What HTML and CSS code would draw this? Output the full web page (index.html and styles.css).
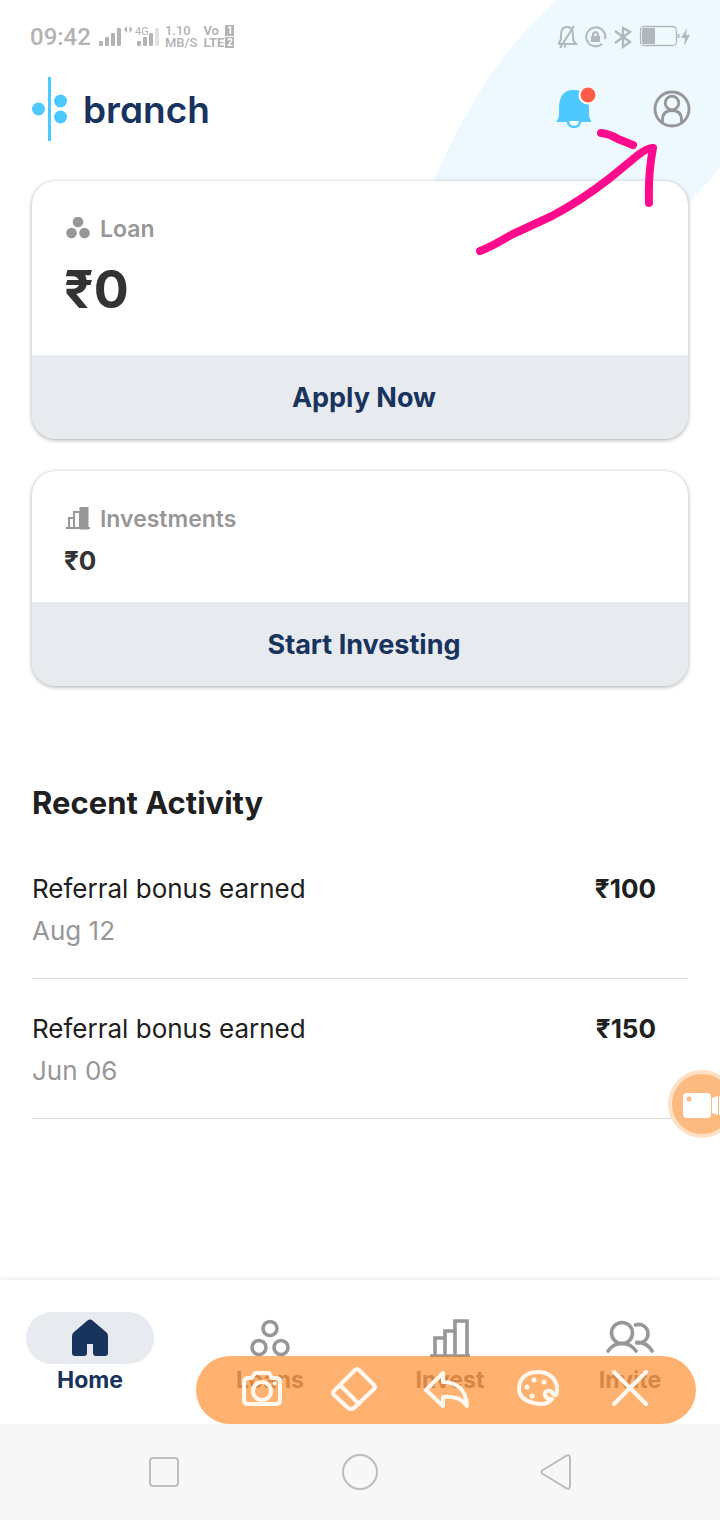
FILE: index.html
```html
<!DOCTYPE html>
<html lang="en">
<head>
  <meta charset="UTF-8">
  <meta name="viewport" content="width=device-width,initial-scale=1">
  <title>Branch</title>
  <link rel="stylesheet" href="styles.css">
</head>
<body>
  <svg class="backdrop" width="290" height="210" viewBox="430 0 290 210" aria-hidden="true">
    <path d="M557 0C500 50 460 117 432 185V210H680C696 196 709 182 720 167V0Z" fill="#eef9ff"/>
  </svg>

  <!-- status bar -->
  <div class="status">
    <div class="status-left">
      <span class="clock">09:42</span>
      <svg width="62" height="26" viewBox="98 24 62 26" fill="#b3b3b3">
        <rect x="100" y="41" width="4" height="5" rx="1"/><rect x="106" y="37" width="4" height="9" rx="1"/>
        <rect x="112" y="33" width="4" height="13" rx="1"/><rect x="118" y="28" width="4" height="18" rx="1"/>
        <path d="M128 26v7l-3-3.500zM130.500 26v7l3-3.500z"/>
        <text x="136" y="35" class="net">4G</text>
        <rect x="138" y="41" width="4" height="5" rx="1"/><rect x="144" y="37" width="4" height="9" rx="1"/>
        <rect x="150" y="33" width="4" height="13" rx="1"/><rect x="156" y="28" width="4" height="18" rx="1" fill="#e2e2e2"/>
      </svg>
      <div class="stack"><span>1.10</span><span>MB/S</span></div>
      <div class="stack lte"><span>Vo <i>1</i></span><span>LTE<i>2</i></span></div>
    </div>
    <svg width="136" height="26" viewBox="556 24 136 26" fill="none" stroke="#b1b8bd" stroke-width="2">
      <path d="M559 44h17c-3-3-3-5-3-9 0-5-2-8-6-8s-6 3-6 8c0 4 0 6-3 9M560 48l14-22M564 46l2 1"/>
      <path d="M602 44a9.500 9.500 0 1 1 3-5M598 46h-5"/>
      <rect x="591" y="36" width="9" height="6" fill="#b1b8bd" stroke="none"/><path d="M593 37v-3q2.500-4 5 0v3"/>
      <path d="M615 31l15 11-7 5V28l7 4-15 11" stroke-width="2.400"/>
      <rect x="640.500" y="26.500" width="36" height="19" rx="4" stroke-width="1.300"/>
      <path d="M644 28h11v16h-11q-2 0-2-2V30q0-2 2-2zM677.500 34h2v4h-2z" fill="#b1b8bd" stroke="none"/>
      <path d="M687 28l-6 10h4l-1 8 6-11h-4z" fill="#b1b8bd" stroke="none"/>
    </svg>
  </div>

  <header class="header">
    <a class="logo" href="#" aria-label="branch">
      <svg width="36" height="64" viewBox="0 0 36 64" fill="#4dc9ff">
        <path d="M16 0h3v64h-3z"/>
        <circle cx="6.500" cy="32" r="6.500"/><circle cx="28.500" cy="24" r="6.500"/><circle cx="28.500" cy="40" r="6.500"/>
      </svg>
      <span>branch</span>
    </a>
    <div class="header-actions">
      <button class="icon-btn" aria-label="Notifications">
        <svg width="42" height="44" viewBox="556 87 42 44">
          <path d="M558 122c-2 0-1-2 0-3 1-2 1-5 1-10 0-12 4-19 15-19s15 7 15 19c0 5 0 8 1 10 1 1 2 3 0 3z" fill="#4dc9ff"/>
          <path d="M568 121c0 8 12 8 12 0" fill="#fff" stroke="#4dc9ff" stroke-width="2.500"/>
          <circle cx="588" cy="95" r="8.500" fill="#ff5a4a" stroke="#fff" stroke-width="2"/>
        </svg>
      </button>
      <button class="icon-btn" aria-label="Profile">
        <svg width="38" height="38" viewBox="0 0 38 38" fill="none" stroke="#979797" stroke-width="2.800">
          <circle cx="19" cy="19" r="17"/><circle cx="19" cy="13" r="6.800"/>
          <path d="M9.500 33v-3c0-6 3-9.500 9.500-9.500s9.500 3.500 9.500 9.500v3"/>
        </svg>
      </button>
    </div>
  </header>

  <main>
    <section class="card">
      <div class="card-body loan">
        <h2>
          <svg width="24" height="24" viewBox="0 0 24 24" fill="#979797"><circle cx="12" cy="5" r="5.300"/><circle cx="5.500" cy="16" r="5.300"/><circle cx="18.500" cy="16" r="5.300"/></svg>
          Loan
        </h2>
        <p>₹0</p>
      </div>
      <button class="card-action">Apply Now</button>
    </section>

    <section class="card">
      <div class="card-body">
        <h2>
          <svg width="24" height="24" viewBox="0 0 24 24" fill="none" stroke="#979797" stroke-width="2"><path d="M0 21h24"/><path d="M3 21V11h5v10M8 11V5h6v15"/><path d="M14.500 0.500h7v21h-7z" fill="#979797"/></svg>
          Investments
        </h2>
        <p>₹0</p>
      </div>
      <button class="card-action">Start Investing</button>
    </section>

    <section class="activity">
      <h1>Recent Activity</h1>
      <ul>
        <li>
          <div>Referral bonus earned<time>Aug 12</time></div>
          <b>₹100</b>
        </li>
        <li>
          <div>Referral bonus earned<time>Jun 06</time></div>
          <b>₹150</b>
        </li>
      </ul>
    </section>
  </main>

  <footer class="bottom">
    <nav class="tabs">
      <a class="active" href="#">
        <span class="pill"><svg width="36" height="38" viewBox="0 0 36 38" fill="#18335d"><path d="M15.500 1.500q2.500-2 5 0L34 13q2 1.500 2 4v17q0 3-3 3h-9q-3 0-3-3v-9h-6v9q0 3-3 3H3q-3 0-3-3V17q0-2.500 2-4z"/></svg></span>
        Home
      </a>
      <a href="#">
        <span class="pill"><svg width="40" height="38" viewBox="0 0 40 38" fill="none" stroke="#979797" stroke-width="3.600"><circle cx="20" cy="9.500" r="7"/><circle cx="9" cy="28.500" r="7"/><circle cx="31" cy="28.500" r="7"/></svg></span>
        Loans
      </a>
      <a href="#">
        <span class="pill"><svg width="42" height="38" viewBox="0 0 42 38" fill="none" stroke="#979797" stroke-width="3.600"><path d="M1 37h40M6 36V19h9M16 36V12h9M26 37V2h12v35"/></svg></span>
        Invest
      </a>
      <a href="#">
        <span class="pill"><svg width="48" height="38" viewBox="0 0 48 38" fill="none" stroke="#979797" stroke-width="3.600" stroke-linecap="round"><circle cx="16" cy="14" r="10.500"/><path d="M2 32q5-7.500 14-7.500t14 7.500M29.500 6a9.300 9.300 0 1 1 0 17.500q11-1 16.500 8.500"/></svg></span>
        Invite
      </a>
    </nav>

    <!-- recorder tools -->
    <div class="tools">
      <button aria-label="Camera"><svg width="44" height="44" viewBox="0 0 44 44"><path d="M8 12h4l3-5h14l3 5h4q4 0 4 4v18q0 4-4 4H8q-4 0-4-4V16q0-4 4-4z"/><circle cx="22" cy="25" r="9"/><circle cx="34.500" cy="17.500" r="2" class="dot"/></svg></button>
      <button aria-label="Eraser"><svg width="48" height="48" viewBox="0 0 48 48"><path d="M4 27L25 6q2-2 4 0l15 15q2 2 0 4L25 43q-4 4-8 0L4 31q-2-2 0-4zM11 22l18 18"/></svg></button>
      <button aria-label="Undo"><svg width="48" height="44" viewBox="0 0 48 44"><path d="M4 24L21 7v9c14 0 23 8 24 24-5-8-13-10-24-9v9z"/></svg></button>
      <button aria-label="Colors"><svg width="44" height="44" viewBox="0 0 44 44"><path d="M36 33C32 38 25 39 18 37 8 35 2 29 3 21 4 11 12 6 22 6c11 0 19 7 19 17q0 9-4 5c-2-5-9-4-8 1 1 3 3 5 7 4z"/><circle cx="18" cy="14" r="2.500" class="dot"/><circle cx="28" cy="16" r="2.500" class="dot"/><circle cx="11" cy="21" r="2.500" class="dot"/><circle cx="16" cy="30" r="2.500" class="dot"/></svg></button>
      <button aria-label="Close"><svg width="44" height="44" viewBox="0 0 44 44"><path d="M6 6l32 32M38 6L6 38"/></svg></button>
    </div>

    <div class="system-nav">
      <button aria-label="Recent apps"><svg width="36" height="36" viewBox="0 0 36 36"><rect x="4" y="4" width="28" height="28" rx="3"/></svg></button>
      <button aria-label="Home screen"><svg width="36" height="36" viewBox="0 0 36 36"><circle cx="18" cy="18" r="17"/></svg></button>
      <button aria-label="Back"><svg width="36" height="36" viewBox="0 0 36 36"><path d="M5 16L28 2q4-2 4 2v28q0 4-4 2L5 20q-3-2 0-4z"/></svg></button>
    </div>
  </footer>

  <button class="record" aria-label="Record">
    <svg width="60" height="60" viewBox="0 0 60 60" fill="#fff"><rect x="11" y="19" width="28" height="25" rx="4"/><path d="M40 24l6-2v19l-6-2zM47 22h10v19H47z"/><circle cx="17" cy="25" r="2.500" fill="#fdba80"/></svg>
  </button>

  <!-- hand-drawn arrow pointing at the profile icon -->
  <svg class="arrow" width="190" height="136" viewBox="470 124 190 136" aria-hidden="true">
    <path d="M601 133q9 1 17 6l15 6M480 251C493 246 500 241 513 234L552 216Q582 200 610 178L638 155Q649 147 653 148Q648 174 649 203"/>
  </svg>
</body>
</html>
```
FILE: styles.css
```css
* { box-sizing: border-box; }
body { position: relative; display: flex; flex-direction: column; min-height: 100vh; margin: 0; overflow-x: hidden; background: #fff; color: #202020; font-family: Inter, "Liberation Sans", sans-serif; }
button { padding: 0; border: none; background: none; font-family: inherit; cursor: pointer; }
a { color: inherit; text-decoration: none; }
svg { display: block; flex: none; }
h1, h2, p, ul { margin: 0; padding: 0; }

.backdrop { position: absolute; top: 0; right: 0; z-index: -1; }

.status { display: flex; justify-content: space-between; align-items: center; height: 74px; padding: 0 28px 0 30px; color: #b3b3b3; font-family: Roboto, sans-serif; }
.status-left { display: flex; align-items: center; gap: 6px; }
.clock { font-size: 24px; font-weight: 500; }
.net { font-size: 11px; }
.stack { display: flex; flex-direction: column; font-size: 13px; line-height: 12px; font-weight: 500; }
.lte { font-weight: 700; }
.lte span { display: flex; justify-content: space-between; gap: 1px; }
.lte i { flex: none; width: 9px; height: 11px; background: #b3b3b3; color: #fff; font-size: 10px; line-height: 11px; font-style: normal; text-align: center; }

.header { display: flex; justify-content: space-between; align-items: center; height: 70px; padding: 0 29px 0 32px; }
.logo { display: flex; align-items: center; gap: 15px; color: #18335d; font-size: 37px; font-weight: 600; font-feature-settings: "cv11"; }
.header-actions { display: flex; align-items: center; gap: 55px; }

main { flex: 1; padding: 37px 32px 0; }
.card { margin-bottom: 32px; border-radius: 24px; background: #fff; box-shadow: 0 1px 4px rgba(0, 0, 0, 0.35); overflow: hidden; }
.card-body { padding: 32px 32px 24px; }
.card-body h2 { display: flex; align-items: center; gap: 10px; height: 32px; padding-left: 2px; color: #979797; font-size: 23px; font-weight: 600; }
.card-body p { height: 43px; padding-top: 8px; color: #333; font-size: 26px; line-height: 36px; font-weight: 700; }
.loan p { height: 86px; font-size: 52px; line-height: 74px; }
.card-action { display: block; width: 100%; height: 84px; padding-left: 8px; background: #e7eaef; color: #18335d; font-size: 27px; font-weight: 700; }

.activity { padding-top: 65px; }
.activity h1 { margin-bottom: 16px; font-size: 31px; line-height: 40px; font-weight: 700; }
.activity ul { list-style: none; }
.activity li { display: flex; justify-content: space-between; height: 140px; padding: 29px 32px 0 0; border-bottom: 1px solid #d6d6d6; font-size: 26px; line-height: 42px; }
.activity time { display: block; color: #979797; }

.bottom { position: relative; }
.tabs { display: flex; height: 144px; padding-top: 32px; background: #fff; box-shadow: 0 -1px 4px rgba(0, 0, 0, 0.1); color: #979797; font-size: 23px; line-height: 32px; font-weight: 700; }
.tabs a { flex: 1; display: flex; flex-direction: column; align-items: center; }
.tabs .active { color: #18335d; }
.pill { display: flex; justify-content: center; align-items: center; width: 128px; height: 52px; border-radius: 26px; }
.active .pill { background: #e7eaef; }

.tools { position: absolute; right: 24px; bottom: 96px; display: flex; width: 500px; height: 68px; padding: 0 20px 4px; border-radius: 34px; background: rgba(255, 125, 17, 0.6); }
.tools button { flex: 1; display: flex; justify-content: center; align-items: center; }
.tools svg { fill: none; stroke: #fff8f0; stroke-width: 4; stroke-linejoin: round; stroke-linecap: round; }
.tools .dot { fill: #fff8f0; stroke: none; }

.system-nav { display: flex; height: 96px; padding: 0 66px; background: #f7f7f7; }
.system-nav button { flex: 1; display: flex; justify-content: center; align-items: center; }
.system-nav svg { fill: none; stroke: #bdbdbd; stroke-width: 2; }

.record { position: fixed; right: -16px; bottom: 382px; width: 68px; height: 68px; border: 4px solid #fde0c6; border-radius: 50%; background: #fdba80; }
.arrow { position: absolute; top: 124px; right: 60px; fill: none; stroke: #ff0a8c; stroke-width: 8; stroke-linecap: round; stroke-linejoin: round; pointer-events: none; }
```
